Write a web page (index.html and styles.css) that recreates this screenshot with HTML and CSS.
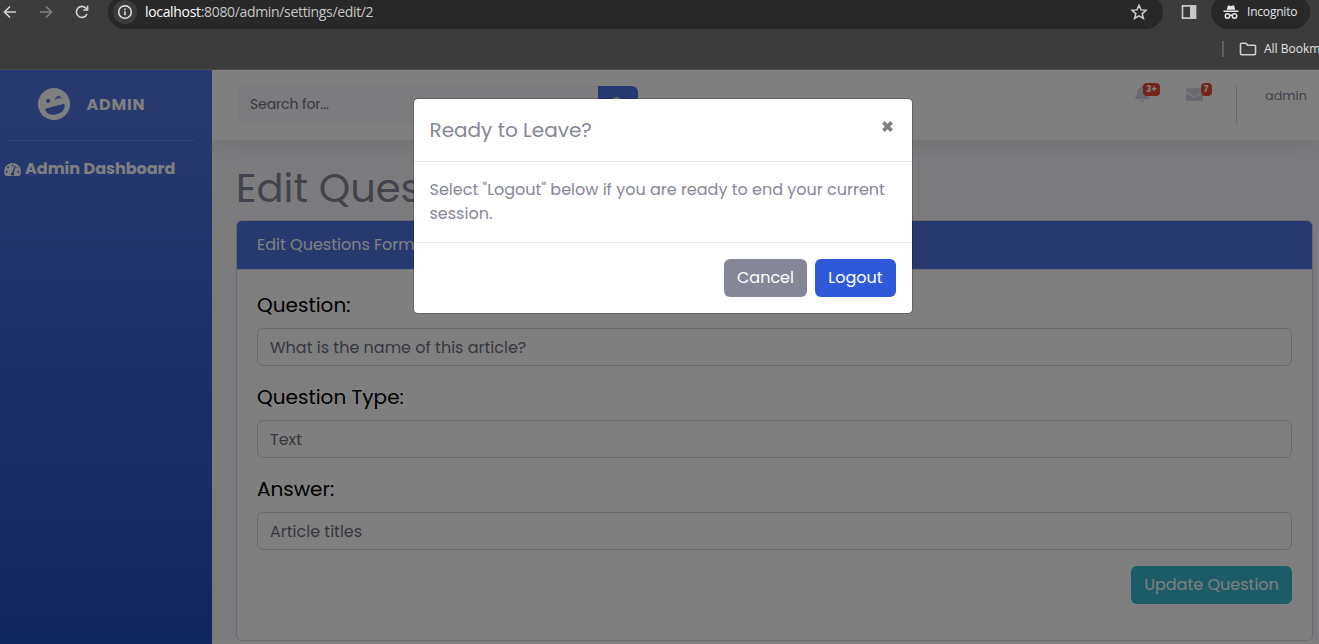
FILE: index.html
```html
<!DOCTYPE html>
<html lang="en">
<head>
<meta charset="utf-8">
<title>Edit Questions</title>
<link rel="stylesheet" href="styles.css">
</head>
<body>
<header class="browser">
  <div class="toolbar">
    <svg class="nav-icon" viewBox="0 0 16 16"><path d="M14 8H2.5M8 2.5 2.5 8 8 13.500"/></svg>
    <svg class="nav-icon forward" viewBox="0 0 16 16"><path d="M2 8h11.500M8 2.500 13.500 8 8 13.500"/></svg>
    <svg class="nav-icon" viewBox="0 0 16 16"><path d="M13 10a5.500 5.500 0 1 1-.8-5.500L13.500 6"/><path d="M13.500 1.800V6H9.300"/></svg>
    <div class="omnibox">
      <span class="site-info"><svg viewBox="0 0 16 16"><circle cx="8" cy="8" r="6.300"/><path d="M8 7.300v4M8 4.600v1.600"/></svg></span>
      <span class="url"><b>localhost</b>:8080/admin/settings/edit/2</span>
      <svg class="star" viewBox="0 0 18 18"><path d="m9 2.300 2 4.600 5 .4-3.800 3.300 1.200 4.900L9 12.900l-4.400 2.600 1.200-4.900L2 7.300l5-.4z"/></svg>
    </div>
    <svg class="panel" viewBox="0 0 16 16"><path fill="none" stroke="#c7c7c7" stroke-width="1.700" d="M1.500 1.800h13v12.400h-13z"/><path fill="#c7c7c7" d="M9 1.500h5.500v13H9z"/></svg>
    <div class="incognito">
      <svg viewBox="0 0 16 16"><path fill="#e3e3e3" d="M5 1.200 8 2l3-.8 1.300 4.500H3.700zM.5 6.500h15v1.500H.5z"/><g fill="none" stroke="#e3e3e3" stroke-width="1.500"><circle cx="4.500" cy="12" r="2.200"/><circle cx="11.500" cy="12" r="2.200"/><path d="M6.500 11.500q1.500-.8 3 0"/></g></svg>
      <span>Incognito</span>
    </div>
  </div>
  <div class="bookmarks">
    <i></i>
    <svg viewBox="0 0 18 14"><path d="M1.500 2.300q0-1 1-1H7l1.700 1.900h6.800q1 0 1 1v7.500q0 1-1 1h-13q-1 0-1-1z"/></svg>
    <span>All Bookmarks</span>
  </div>
</header>

<div class="page">
  <aside class="sidebar">
    <div class="brand">
      <svg viewBox="0 0 32 32"><defs><mask id="wink"><rect width="32" height="32" fill="#fff"/><g transform="rotate(-15 16 16)"><circle cx="11.200" cy="11.500" r="2"/><path d="M18.500 12.300c.7-3.600 5.400-3.600 6.100 0-1.800-1.300-4.300-1.300-6.100 0z" stroke="#000" stroke-width=".5"/><path d="M7 18.300h18a1 1 0 0 1 1 1.200c-.7 4.500-4.300 7-8.500 7h-3c-4.200 0-7.800-2.500-8.500-7a1 1 0 0 1 1-1.200z"/></g></mask></defs><circle cx="16" cy="16" r="16" fill="#fff" mask="url(#wink)"/></svg>
      <span>ADMIN</span>
    </div>
    <hr>
    <a class="side-link">
      <svg viewBox="0 0 576 512"><path fill="#fff" d="M288 32C129 32 0 161 0 320c0 53 14 102 39 145 6 10 16 15 28 15h442c12 0 22-5 28-15 25-43 39-92 39-145C576 161 447 32 288 32z"/><g fill="#4e73df"><circle cx="288" cy="120" r="34"/><circle cx="135" cy="180" r="34"/><circle cx="90" cy="330" r="34"/><circle cx="486" cy="330" r="34"/><circle cx="455" cy="190" r="24"/><path d="m360 130 44 15-74 222c35 32 16 80-5 97h-74c-42-53-10-110 34-112z"/></g></svg>
      <span>Admin Dashboard</span>
    </a>
  </aside>
  <main class="content">
    <nav class="topbar">
      <div class="search"><span class="search-text">Search for...</span>
        <span class="search-btn"><svg viewBox="0 0 16 16"><circle cx="6.500" cy="6.500" r="5"/><path d="m10 10 5 5"/></svg></span></div>
      <div class="alerts">
        <span class="notice"><svg class="bell" viewBox="0 0 448 512"><path d="M224 512c35.320 0 63.970-28.650 63.970-64H160.030c0 35.350 28.650 64 63.970 64zm215.390-149.710c-19.320-20.760-55.470-51.990-55.470-154.290 0-77.700-54.480-139.900-127.940-155.160V32c0-17.670-14.320-32-31.980-32s-31.980 14.330-31.980 32v20.840C118.560 68.100 64.080 130.300 64.080 208c0 102.300-36.150 133.530-55.470 154.290-6 6.450-8.660 14.160-8.610 21.710.11 16.400 12.980 32 32.100 32h383.800c19.120 0 32-15.600 32.100-32 .05-7.550-2.610-15.270-8.610-21.710z"/></svg><b class="badge badge-alerts">3+</b></span>
        <span class="notice mail"><svg class="envelope" viewBox="0 0 512 512"><path d="M502.300 190.800c3.900-3.100 9.700-.2 9.700 4.700V400c0 26.500-21.500 48-48 48H48c-26.500 0-48-21.500-48-48V195.600c0-5 5.700-7.800 9.700-4.700 22.400 17.400 52.100 39.500 154.100 113.600 21.100 15.400 56.700 47.800 92.200 47.600 35.700.3 72-32.800 92.300-47.600 102-74.100 131.600-96.300 154-113.700zM256 320c23.200.4 56.600-29.200 73.400-41.400 132.700-96.300 142.800-104.700 173.400-128.700 5.800-4.500 9.200-11.500 9.200-18.900v-19c0-26.500-21.500-48-48-48H48c-26.500 0-48 21.500-48 48v19c0 7.400 3.400 14.300 9.200 18.900 30.600 23.900 40.700 32.400 173.400 128.700 16.800 12.200 50.200 41.800 73.400 41.400z"/></svg><b class="badge badge-mail">7</b></span>
      </div>
      <span class="user">admin</span>
    </nav>
    <section class="form-area">
      <h1>Edit Questions</h1>
      <div class="card">
        <div class="card-header">Edit Questions Form</div>
        <div class="card-body">
          <label>Question:</label>
          <div class="field">What is the name of this article?</div>
          <label>Question Type:</label>
          <div class="field">Text</div>
          <label>Answer:</label>
          <div class="field">Article titles</div>
          <div class="actions"><span class="btn btn-info">Update Question</span></div>
        </div>
      </div>
    </section>
  </main>
  <div class="backdrop"></div>
  <div class="modal">
    <div class="modal-header"><h5>Ready to Leave?</h5>
      <svg viewBox="0 0 12 12"><path d="m2.200 2.200 7.600 7.600m0-7.600L2.200 9.800"/></svg></div>
    <div class="modal-body">Select "Logout" below if you are ready to end your current<br><span>session.</span></div>
    <div class="modal-footer"><span class="btn btn-secondary">Cancel</span><span class="btn btn-primary">Logout</span></div>
  </div>
</div>
</body>
</html>
```
FILE: styles.css
```css
* { box-sizing: border-box; }
body { margin: 0; height: 644px; overflow: hidden; display: flex; flex-direction: column; font: 16px/24px Poppins, Inter, sans-serif; color: #858796; }
svg { display: block; flex: none; }

/* Browser chrome */
.browser { height: 70px; flex: none; background: #3c3c3c; border-bottom: 1px solid #4b4b4b; font-family: "Segoe UI", "Open Sans", sans-serif; color: #e3e3e3; overflow: hidden; }
.toolbar { display: flex; height: 28px; align-items: flex-start; }
.nav-icon { width: 16px; height: 16px; margin: 4px 20px 0 0; fill: none; stroke: #d0d0d0; stroke-width: 1.700; }
.nav-icon:first-child { margin-left: 2px; }
.forward { stroke: #7d7d7d; }
.omnibox { display: flex; align-items: center; width: 1055px; height: 34px; margin-top: -5px; margin-left: -2px; padding: 0 15px 0 5px; background: #282828; border-radius: 17px; }
.site-info { display: grid; place-items: center; width: 24px; height: 24px; border-radius: 50%; background: #3c3c3c; }
.site-info svg { width: 16px; height: 16px; fill: none; stroke: #e3e3e3; stroke-width: 1.500; }
.url { flex: 1; margin-left: 8px; font-size: 14px; letter-spacing: -.33px; color: #c7c7c7; }
.url b { font-weight: 400; color: #fff; }
.star { width: 18px; height: 18px; fill: none; stroke: #d0d0d0; stroke-width: 1.500; }
.panel { width: 16px; height: 16px; margin: 4px 14px 0 18px; }
.incognito { display: flex; align-items: center; gap: 8px; width: 99px; height: 34px; margin-top: -5px; padding-left: 12px; border-radius: 17px; background: #282828; font-size: 12px; letter-spacing: -.2px; }
.incognito svg { width: 16px; height: 16px; }
.bookmarks { display: flex; align-items: center; width: 1400px; height: 41px; padding-left: 1222px; font-size: 12px; }
.bookmarks i { width: 2px; height: 16px; background: #606060; }
.bookmarks svg { width: 18px; height: 14px; margin: 0 7px 0 15px; fill: none; stroke: #d0d0d0; stroke-width: 1.600; }

/* Admin page */
.page { position: relative; display: flex; flex: 1; min-height: 0; background: #fff; }
.sidebar { width: 212px; flex: none; padding: 0 16px 0 4px; background: linear-gradient(180deg, #4e73df 10%, #224abe 100%); color: #fff; font-weight: 700; }
.brand { display: flex; align-items: center; gap: 16px; height: 70px; padding: 0 0 1px 34.5px; letter-spacing: .8px; }
.brand svg { width: 32px; height: 32px; margin: -1px .5px 0 -.5px; }
.sidebar hr { margin: 0; border: 0; border-top: 1px solid rgba(255,255,255,.15); }
.side-link { display: flex; align-items: center; gap: 4px; margin-top: 16px; white-space: nowrap; }
.side-link svg { width: 17px; height: 15px; }
.content { flex: 1; min-width: 0; overflow: hidden; background: linear-gradient(#f8f9fc 571px, #fff 571px); }
.topbar { position: relative; display: flex; height: 70px; padding: 16px 12px 16px 26px; background: #fff; box-shadow: 0 2px 28px rgba(58,59,69,.15); }
.search { display: flex; flex: none; width: 400px; height: 38px; background: #f8f9fc; border-radius: 6px; overflow: hidden; font-size: 14px; color: #6e707e; letter-spacing: -.12px; }
.search-text { flex: 1; padding: 6px 12px; }
.search-btn { display: grid; place-items: center; width: 40px; background: #4e73df; }
.search-btn svg { width: 16px; height: 16px; fill: none; stroke: #fff; stroke-width: 2.500; }
.alerts { display: flex; flex: none; width: 101px; margin-left: 497px; }
.notice { position: relative; width: 51px; color: #d1d3e2; fill: #d1d3e2; }
.bell { width: 14px; height: 16px; }
.envelope { width: 17px; height: 17px; }
.badge { position: absolute; top: -3px; height: 13px; padding: 0 3px; border-radius: 4px; background: #e74a3b; color: #fff; font-size: 8.500px; line-height: 13px; text-align: center; }
.badge-alerts { left: 8px; width: 17px; }
.badge-mail { left: 15px; width: 11px; }
.user { height: 38px; padding: 0 0 0 28px; border-left: 1px solid #d1d3e2; font-size: 12.800px; line-height: 19px; }
.form-area { padding: 24px 6px 0 24px; }
h1 { margin: 0 0 8px; font-size: 40px; line-height: 48px; font-weight: 400; }
.card { height: 421px; border: 1px solid #d1d3e2; border-radius: 6px; background: #fff; overflow: hidden; }
.card-header { height: 49px; padding: 12px 20px 10px; background: #4e73df; color: #fff; border-bottom: 1px solid #e3e6f0; background-clip: padding-box; }
.card-body { padding: 20px; color: #000; }
.card-body label { display: block; height: 38px; font-size: 20px; line-height: 30px; font-weight: 400; }
.field { height: 38px; margin-bottom: 16px; padding: 7px 12px 5px; border: 1px solid #d1d3e2; border-radius: 6px; color: #6e707e; }
.actions { display: flex; justify-content: flex-end; }
.btn { display: grid; place-items: center; height: 38px; border-radius: 6px; color: #fff; white-space: nowrap; }
.btn-info { width: 161px; background: #36b9cc; }

/* Logout dialog */
.backdrop { position: absolute; inset: 0; background: rgba(0,0,0,.5); }
.modal { position: absolute; left: 413px; top: 28px; width: 500px; height: 216px; border: 1px solid rgba(0,0,0,.2); border-radius: 5px; background: #fff; background-clip: padding-box; white-space: nowrap; }
.modal-header { display: flex; justify-content: space-between; height: 63px; padding: 16px 16px 16px 15.500px; border-bottom: 1px solid #e3e6f0; }
.modal-header h5 { margin: 0; font-size: 20px; line-height: 30px; font-weight: 400; }
.modal-header svg { width: 13px; height: 13px; margin: 5px 2px 0 0; fill: none; stroke: #7f7f7f; stroke-width: 3.300; }
.modal-body { height: 80px; padding: 16px 15.500px; }
.modal-footer { display: flex; justify-content: flex-end; gap: 8px; padding: 16px; border-top: 1px solid #e3e6f0; }
.btn-secondary { width: 83px; background: #858796; }
.btn-primary { width: 81px; background: #2e59d9; }
```
